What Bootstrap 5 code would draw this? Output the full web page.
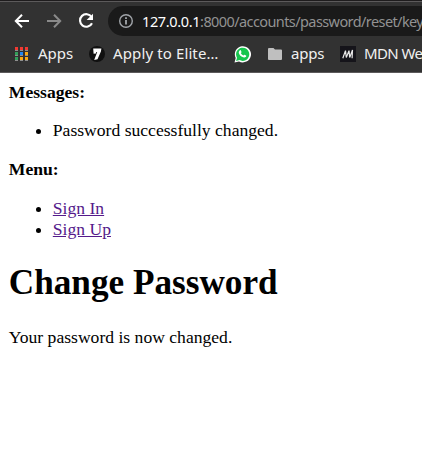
<!DOCTYPE html>
<html lang="en">
<head>
<meta charset="utf-8">
<title>Change Password</title>
<link href="https://cdn.jsdelivr.net/npm/bootstrap@5.3.0/dist/css/bootstrap.min.css" rel="stylesheet">
<style>
body { background: #fff; color: #000; overflow: hidden; height: 467px; }
.browser { height: 73px; background: #323232; border-bottom: 1px solid #5c5a5b; font-family: "Noto Sans", "Open Sans", sans-serif; font-size: 15px; color: #f0f0f0; }
.browser svg { display: block; flex: none; }
.edge { height: 2px; background: #1e1c1d; border-bottom: 1px solid #5c5a5b; }
.tools { height: 38px; padding: 4px 0 4px 12px; }
.tools .omni { height: 30px; width: 340px; margin-left: 12px; padding-left: 10px; background: #1a1a1a; border-radius: 15px 0 0 15px; color: #929292; flex: none; }
.url { margin-left: 8px; white-space: nowrap; font-size: 14.5px; line-height: 30px; }
.url .host { color: #fff; letter-spacing: -.37px; }
.url .path { letter-spacing: -.59px; }
.forward { margin-left: 15px; }
.reload { margin-left: 13px; }
.marks { height: 30px; margin-top: -1px; padding-left: 15px; line-height: 28px; white-space: nowrap; }
.marks span { flex: none; padding-bottom: 2px; }
.m1 { margin-left: 10px; width: 51px; }
.m2 { margin-left: 8px; width: 121px; letter-spacing: .12px; }
.folder { margin-left: 17px; }
.m3 { margin-left: 9px; width: 49px; letter-spacing: -.2px; }
.m4 { margin-left: 8px; letter-spacing: -.6px; }
.doc { padding: 8.8px; font: 17.6px/normal "Liberation Serif", serif; }
.doc ul { margin: 17.6px 0; padding-left: 44px; }
.doc a { color: #551a8b; }
.doc h1 { font-size: 35.2px; line-height: normal; font-weight: 700; margin: 23.6px 0; }
.doc p { margin: 0; }
</style>
<script src="https://cdn.jsdelivr.net/npm/bootstrap@5.3.0/dist/js/bootstrap.bundle.min.js"></script>
</head>
<body>
<header class="browser overflow-hidden">
  <div class="edge"></div>
  <div class="tools d-flex align-items-center">
    <svg width="20" height="20" viewBox="0 0 20 20" fill="none" stroke="#fff" stroke-width="2"><path d="M17 10H4.2M10 3.8 3.8 10l6.2 6.2"/></svg>
    <svg class="forward" width="16" height="20" viewBox="2 0 16 20" fill="none" stroke="#8a8a8a" stroke-width="2"><path d="M2 10h12.8M9 3.8l6.2 6.2L9 16.2"/></svg>
    <svg class="reload" width="20" height="20" viewBox="0 0 20 20"><path d="M15.6 6A6.3 6.3 0 1 0 16 12.2" fill="none" stroke="#fff" stroke-width="2.1"/><path d="M17 2.8V9h-6.4z" fill="#fff"/></svg>
    <div class="omni d-flex align-items-center">
      <svg width="16" height="16" viewBox="0 0 16 16"><circle cx="8" cy="8" r="6.3" fill="none" stroke="#a0a4a9" stroke-width="1.4"/><path d="M7.2 7h1.6v4.5H7.2zM7.2 4.3h1.6v1.6H7.2z" fill="#b5b9be"/></svg>
      <span class="url"><span class="host">127.0.0.1</span><span class="path">:8000/accounts/password/reset/key</span></span>
    </div>
  </div>
  <div class="marks d-flex align-items-center">
    <svg width="13" height="14" viewBox="0 0 13 14"><path d="M0 3h3v1H0zM5 3h3v1H5zM10 3h3v1h-3zM0 8h3v1H0zM5 8h3v1H5zM10 8h3v1h-3zM0 13h3v1H0zM5 13h3v1H5zM10 13h3v1h-3z" fill="#8f8f8f"/><path d="M0 0h3v3H0zM5 0h3v3H5zM10 0h3v3h-3z" fill="#f13a32"/><path d="M0 5h3v3H0zM0 10h3v3H0z" fill="#32a05a"/><path d="M5 5h3v3H5z" fill="#1e88f5"/><path d="M10 5h3v3h-3zM5 10h3v3H5zM10 10h3v3h-3z" fill="#fbaa12"/></svg>
    <span class="m1">Apps</span>
    <svg width="16" height="16" viewBox="0 0 16 16"><circle cx="8" cy="8" r="8" fill="#101010"/><path d="M4.2 2.6h8.2l-.5 3-3.4 7.6-3.3.7 3-8-.9.1-.4 1.5-2.3.3z" fill="#fff"/></svg>
    <span class="m2">Apply to Elite…</span>
    <svg width="17" height="17" viewBox="0 0 17 17"><path d="M.5 16.5 1.7 12A8.1 8.1 0 1 1 5 15.4z" fill="#fff"/><path d="m2.1 14.9.9-3.2a6.6 6.6 0 1 1 2.5 2.4z" fill="#17c64e"/><path d="M5.7 4.4c.5-.5 1-.3 1.2.2l.6 1.3c.1.4-.5.9-.7 1.2.5 1.1 1.5 2 2.7 2.5.3-.3.7-1 1.1-.9l1.4.7c.6.2.2 1.3-.3 1.7-1.1.8-2.5.4-3.7-.3-1.3-.8-2.5-2-3-3.4-.5-1.1-.2-2.2.7-3z" fill="#fff"/></svg>
    <svg class="folder" width="14" height="12" viewBox="0 0 14 12"><path d="M1 0h4.5L7 1.6h6q1 0 1 1V11q0 1-1 1H1q-1 0-1-1V1q0-1 1-1z" fill="#bfbfbf"/></svg>
    <span class="m3">apps</span>
    <svg width="16" height="16" viewBox="0 0 16 16"><path d="M0 0h16v16H0z" fill="#15141a"/><path d="M2.8 12.3 5.5 4.6 6.3 11.5 9 4.6l.7 6.9L12.5 4l-.4 8.3" fill="none" stroke="#e8e8e8" stroke-width="1.2" stroke-linejoin="bevel"/></svg>
    <span class="m4">MDN We</span>
  </div>
</header>
<main class="doc">
  <strong>Messages:</strong>
  <ul><li>Password successfully changed.</li></ul>
  <strong>Menu:</strong>
  <ul>
    <li><a href="#">Sign In</a></li>
    <li><a href="#">Sign Up</a></li>
  </ul>
  <h1>Change Password</h1>
  <p>Your password is now changed.</p>
</main>
</body>
</html>
